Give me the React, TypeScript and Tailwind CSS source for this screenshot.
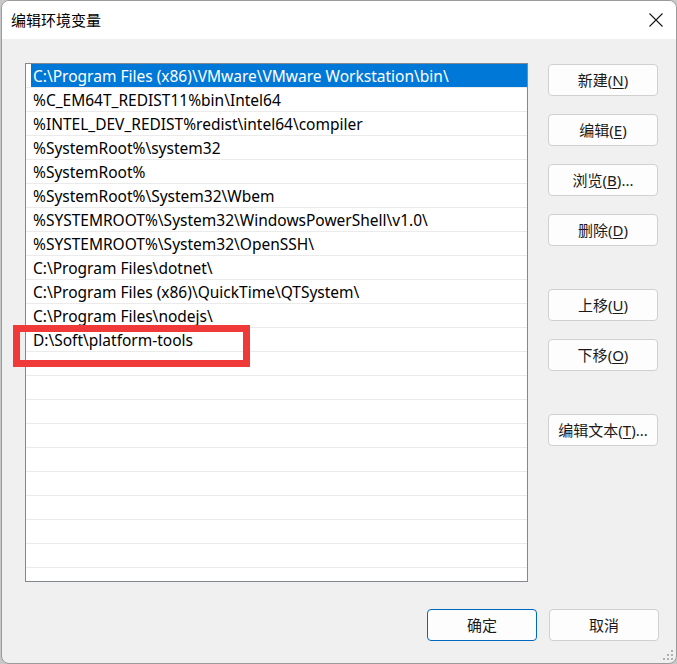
const paths = [
  'C:\\Program Files (x86)\\VMware\\VMware Workstation\\bin\\',
  '%C_EM64T_REDIST11%bin\\Intel64',
  '%INTEL_DEV_REDIST%redist\\intel64\\compiler',
  '%SystemRoot%\\system32',
  '%SystemRoot%',
  '%SystemRoot%\\System32\\Wbem',
  '%SYSTEMROOT%\\System32\\WindowsPowerShell\\v1.0\\',
  '%SYSTEMROOT%\\System32\\OpenSSH\\',
  'C:\\Program Files\\dotnet\\',
  'C:\\Program Files (x86)\\QuickTime\\QTSystem\\',
  'C:\\Program Files\\nodejs\\',
  'D:\\Soft\\platform-tools',
];

const rows = [...paths, ...Array(10).fill('')];

function Btn({ label, mnemonic, suffix = '', primary = false }: { label: string; mnemonic?: string; suffix?: string; primary?: boolean }) {
  return (
    <button
      className={`w-[110px] h-[32px] rounded-[4px] bg-[#fdfdfd] text-[15px] text-[#1a1a1a] flex items-center justify-center ${
        primary ? 'border border-[#0067c0]' : 'border border-[#d0d0d0]'
      }`}
    >
      <span>
        {label}
        {mnemonic && (
          <>
            (<span className="underline underline-offset-2">{mnemonic}</span>){suffix}
          </>
        )}
      </span>
    </button>
  );
}

export default function App() {
  return (
    <div
      className="w-[677px] h-[664px] bg-[#c8c8c8] overflow-hidden"
      style={{ fontFamily: '"Noto Sans", "Noto Sans CJK SC", sans-serif' }}
    >
      <div className="relative w-[676px] h-[664px] ml-px bg-[#f0f0f0] border border-[#9a9a9a] rounded-lg overflow-hidden flex flex-col">
        {/* Title bar */}
        <div className="h-[38px] bg-white flex items-center justify-between pl-[9px] pr-[13px] shrink-0">
          <span className="text-[15px] text-black">编辑环境变量</span>
          <svg width="14" height="14" viewBox="0 0 14 14" className="mt-[-1px]">
            <path d="M0.5 0.5 L13.5 13.5 M13.5 0.5 L0.5 13.5" stroke="#1a1a1a" strokeWidth="1.1" />
          </svg>
        </div>

        {/* Body */}
        <div className="flex pl-[23px] pt-[24px]">
          <div className="w-[503px] h-[519px] border border-[#828790] bg-white overflow-hidden">
            {rows.map((p, i) => (
              <div key={i} className="h-[24px] border-b border-[#ebebeb] flex">
                <div
                  className={`flex-1 flex items-center pl-[2px] pt-[3px] text-[15.5px] whitespace-nowrap ${
                    i === 0 ? 'ml-[5px] bg-[#0078d7] text-white' : 'ml-[5px] text-black'
                  }`}
                >
                  {p}
                </div>
              </div>
            ))}
          </div>

          <div className="ml-[20px] mt-px flex flex-col">
            <Btn label="新建" mnemonic="N" />
            <div className="mt-[18px]"><Btn label="编辑" mnemonic="E" /></div>
            <div className="mt-[18px]"><Btn label="浏览" mnemonic="B" suffix="..." /></div>
            <div className="mt-[18px]"><Btn label="删除" mnemonic="D" /></div>
            <div className="mt-[43px]"><Btn label="上移" mnemonic="U" /></div>
            <div className="mt-[18px]"><Btn label="下移" mnemonic="O" /></div>
            <div className="mt-[43px]"><Btn label="编辑文本" mnemonic="T" suffix="..." /></div>
          </div>
        </div>

        {/* Footer buttons */}
        <div className="flex justify-end gap-[12px] pr-[17px] mt-[27px]">
          <Btn label="确定" primary />
          <Btn label="取消" />
        </div>

        {/* Red highlight box */}
        <div className="absolute left-[11px] top-[324px] w-[237px] h-[42px] border-[7px] border-[#f03a3a]" />

        {/* Resize grip */}
        <svg className="absolute right-[2px] bottom-[2px]" width="12" height="12" viewBox="0 0 12 12">
          <rect x="9" y="1" width="2" height="2" fill="#b0b0b0" />
          <rect x="5" y="5" width="2" height="2" fill="#b0b0b0" />
          <rect x="9" y="5" width="2" height="2" fill="#b0b0b0" />
          <rect x="1" y="9" width="2" height="2" fill="#b0b0b0" />
          <rect x="5" y="9" width="2" height="2" fill="#b0b0b0" />
          <rect x="9" y="9" width="2" height="2" fill="#b0b0b0" />
        </svg>
      </div>
    </div>
  );
}
